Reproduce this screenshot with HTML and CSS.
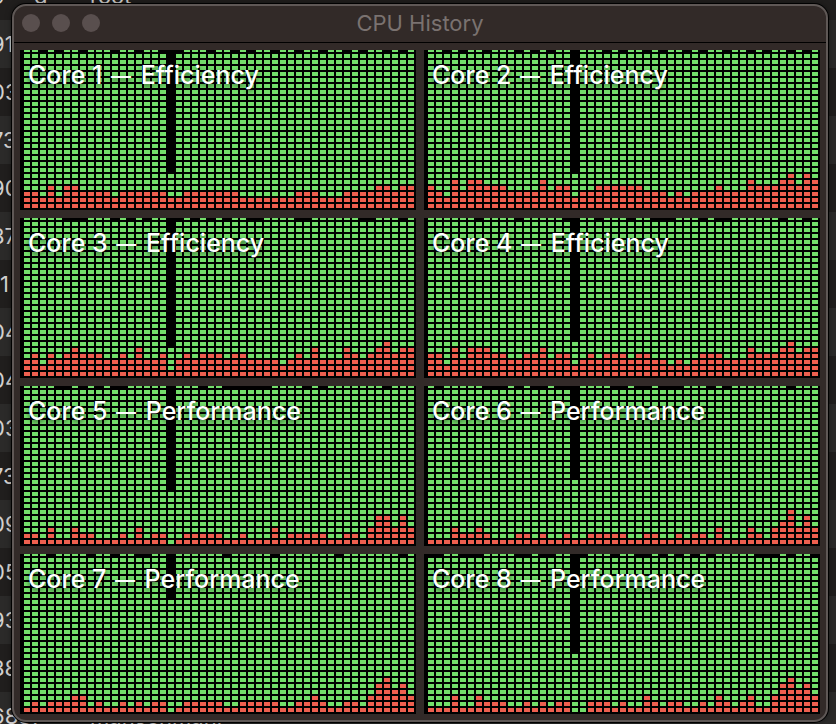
FILE: index.html
```html
<!DOCTYPE html>
<html lang="en">
<head>
<meta charset="utf-8">
<title>CPU History</title>
<link rel="stylesheet" href="styles.css">
</head>
<body>
<div class="processes">
  <div class="row first"><span class="pid">9</span><span class="state">g</span><span class="user">root</span></div>
  <div class="row"><span class="pid">91</span></div>
  <div class="row"><span class="pid">03</span></div>
  <div class="row"><span class="pid">73</span></div>
  <div class="row"><span class="pid">90</span></div>
  <div class="row"><span class="pid">87</span></div>
  <div class="row"><span class="pid">11</span></div>
  <div class="row"><span class="pid">04</span></div>
  <div class="row"><span class="pid">04</span></div>
  <div class="row"><span class="pid">03</span></div>
  <div class="row"><span class="pid">73</span></div>
  <div class="row"><span class="pid">09</span></div>
  <div class="row"><span class="pid">05</span></div>
  <div class="row"><span class="pid">93</span></div>
  <div class="row"><span class="pid">88</span></div>
  <div class="row last"><span class="pid">6837</span><span class="user">mansehmani</span></div>
</div>
<main class="window">
  <header class="titlebar">
    <div class="lights"><i></i><i></i><i></i></div>
    <h1>CPU History</h1>
  </header>
  <div class="cores" id="cores"></div>
</main>
<script src="app.js"></script>
</body>
</html>
```
FILE: styles.css
```css
* { box-sizing: border-box; }
body {
  margin: 0;
  width: 836px;
  height: 724px;
  overflow: hidden;
  position: relative;
  background: #1f1d1c;
  font-family: Inter, "Liberation Sans", sans-serif;
}
.processes { margin-top: -28px; color: #d2d0cf; font-size: 22px; }
.row {
  height: 48px;
  display: flex;
  align-items: center;
  white-space: nowrap;
  background: #201e1d;
}
.row:nth-child(even) { background: #2b2a29; }
.pid { width: 99px; margin-left: -9px; }
.first .pid { width: 43px; }
.first .state { width: 56px; }
.first, .last { align-items: flex-start; padding-top: 11px; }
.window {
  position: absolute;
  left: 12px;
  top: 4px;
  width: 816px;
  height: 718px;
  border: 2px solid #5f5856;
  border-radius: 14px;
  background: #322a28;
  box-shadow: 0 0 0 1px #000, 0 0 6px rgba(0, 0, 0, .5);
  overflow: hidden;
}
.titlebar {
  height: 37px;
  border-bottom: 1px solid #000;
  display: grid;
  grid-template-columns: 100px 1fr 100px;
  align-items: center;
}
.lights { display: flex; gap: 12px; padding: 0 0 2px 8px; }
.lights i { width: 18px; height: 18px; border-radius: 50%; background: #594f4e; }
h1 {
  margin: 0;
  padding-bottom: 3px;
  text-align: center;
  font-size: 22px;
  font-weight: 400;
  line-height: 28px;
  color: #7a7270;
}
.cores {
  display: grid;
  grid-template-columns: 396px 396px;
  gap: 8px;
  padding: 7px 6px;
}
.core { height: 160px; display: grid; background: #000; overflow: hidden; }
.core > * { grid-area: 1 / 1; }
.core h2 {
  z-index: 1;
  margin: 10px 0 0 8px;
  font-size: 25px;
  font-weight: 500;
  line-height: 30px;
  color: #fff;
  white-space: nowrap;
  text-shadow: 0 2px 5px rgba(0, 0, 0, .75);
}
.dash { font-size: 20px; line-height: 1; padding: 0 3px 0 2px; vertical-align: 1px; }
```
FILE: app.js
```js
// One digit per column: lit system (red) blocks; "full" marks columns reaching the top row.
const cores = [
  { number: 1, kind: "Efficiency", idle: 6,
    red: "3324244333323333332233333332222222333222333344344",
    full: "1101011011101101100011101101011011011011010110101" },
  { number: 2, kind: "Efficiency", idle: 6,
    red: "4325355444333353442334444443332323334333544456465",
    full: "1101011011101010110111010110101101011011010110101" },
  { number: 3, kind: "Efficiency", idle: 5,
    red: "3424345444334353341343444344333323435333543456455",
    full: "1111100011101010110010101011001111001111110011101" },
  { number: 4, kind: "Efficiency", idle: 6,
    red: "4425355544334453442343444344332323444333544456455",
    full: "1111110111101111100110111011000111010011111101101" },
  { number: 5, kind: "Performance", idle: 9,
    red: "2213113221112131220122222112111312222211221355353",
    full: "1111001010100111110111011000000111101011111110111" },
  { number: 6, kind: "Performance", idle: 11,
    red: "1113223211122121121122222112211212213111321346353",
    full: "1011111000101001000111100100100011101011111110111" },
  { number: 7, kind: "Performance", idle: 19,
    red: "1212223312112121220122222112222211223211221356453",
    full: "1110111101101100110111111011111011111110111111101" },
  { number: 8, kind: "Performance", idle: 10,
    red: "1113113222112121220022212113212211213212311356453",
    full: "0011000111100100110011101100101010101111100010110" }
];

const COLUMN = 8, BLOCK_W = 6, ROW = 6, BLOCK_H = 4, ROWS = 27, GAP_COLUMN = 18;
const rect = (x, y) => `M${x} ${y}h${BLOCK_W}v${BLOCK_H}h-${BLOCK_W}z`;

document.getElementById("cores").innerHTML = cores.map(core => {
  let green = "", red = "";
  for (let c = 0; c < core.red.length; c++) {
    const height = c === GAP_COLUMN ? core.idle : ROWS - 1 + Number(core.full[c]);
    for (let r = 0; r < height; r++) {
      const block = rect(4 + c * COLUMN, 154 - r * ROW);
      if (r < Number(core.red[c])) red += block; else green += block;
    }
  }
  return `<section class="core"><h2>Core ${core.number} <span class="dash">—</span> ${core.kind}</h2>
    <svg width="396" height="160" shape-rendering="crispEdges">
      <path fill="#73dd6a" d="${green}"/><path fill="#ee5f4f" d="${red}"/>
    </svg></section>`;
}).join("");
```
